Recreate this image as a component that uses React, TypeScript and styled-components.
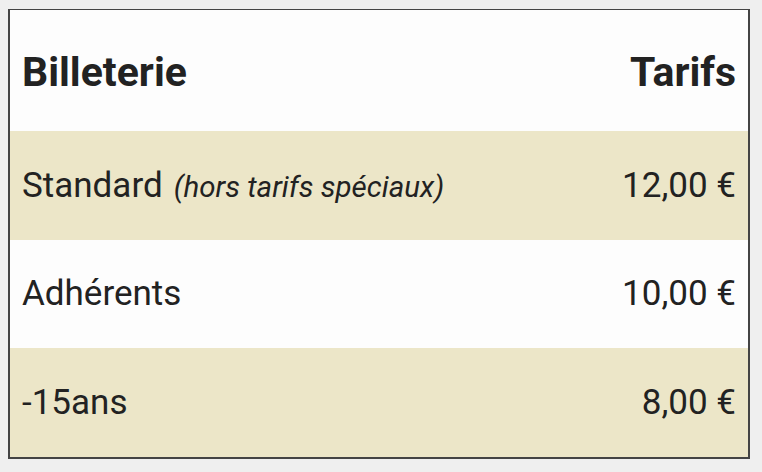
import React from 'react';
import styled, { createGlobalStyle } from 'styled-components';

const tarifs = [
  { label: 'Standard', note: '(hors tarifs spéciaux)', price: '12,00 €' },
  { label: 'Adhérents', price: '10,00 €' },
  { label: '-15ans', price: '8,00 €' },
];

const App = () => {
  return (
    <>
      <GlobalStyle />
      <Table>
        <HeadRow>
          <HeadCell>Billeterie</HeadCell>
          <HeadCell $right>Tarifs</HeadCell>
        </HeadRow>
        {tarifs.map((t, i) => (
          <Row key={t.label} $odd={i % 2 === 0}>
            <Cell>
              {t.label}
              {t.note && <Note>{t.note}</Note>}
            </Cell>
            <Cell $right>{t.price}</Cell>
          </Row>
        ))}
      </Table>
    </>
  );
};

export default App;

const GlobalStyle = createGlobalStyle`
  html, body {
    margin: 0;
    background: #efefef;
  }
  body {
    padding: 9px 12px 0 8px;
    font-family: Roboto, "Liberation Sans", sans-serif;
    color: #222;
  }
`;

const Table = styled.div`
  width: 742px;
  box-sizing: border-box;
  border: 2px solid #444;
  border-top-width: 1px;
  background: #fdfdfd;
`;

const Row = styled.div<{ $odd?: boolean }>`
  display: flex;
  justify-content: space-between;
  align-items: center;
  height: 108.67px;
  padding: 0 12px;
  background: ${(p) => (p.$odd ? '#ece6c8' : '#fdfdfd')};
`;

const HeadRow = styled(Row)`
  height: 121px;
  padding-top: 2px;
  box-sizing: border-box;
`;

const Cell = styled.div<{ $right?: boolean }>`
  font-size: 35px;
  text-align: ${(p) => (p.$right ? 'right' : 'left')};
  white-space: nowrap;
`;

const HeadCell = styled(Cell)`
  font-size: 41px;
  font-weight: 700;
`;

const Note = styled.em`
  font-size: 29.5px;
  margin-left: 11px;
`;
